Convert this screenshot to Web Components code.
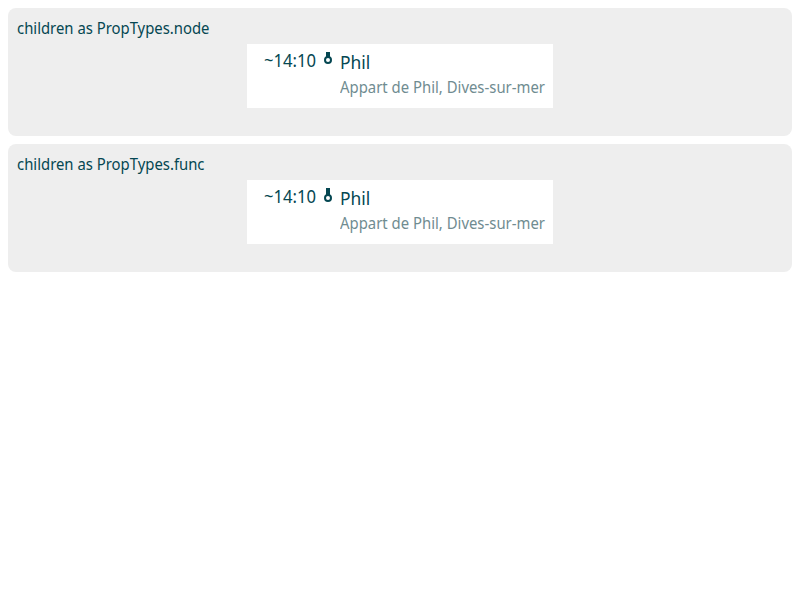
<!DOCTYPE html>
<html lang="en">
<head>
<meta charset="utf-8">
<title>Way points</title>
<style>
body { margin: 8px; background: #fff; color: #054752; font: 16px/20px "Noto Sans", "Open Sans", sans-serif; }
</style>
</head>
<body>
<story-list>
  <story-section heading="children as PropTypes.node" heading-width="192.5">
    <way-point time="~14:10" name="Phil" place="Appart de Phil, Dives-sur-mer" stem="4"></way-point>
  </story-section>
  <story-section heading="children as PropTypes.func" heading-width="187.5">
    <way-point time="~14:10" name="Phil" place="Appart de Phil, Dives-sur-mer" stem="6"></way-point>
  </story-section>
</story-list>
<script>
/* One line of text condensed to the width given in its "width" attribute. */
class FitText extends HTMLElement {
  connectedCallback() {
    const root = this.attachShadow({ mode: 'open' });
    root.innerHTML = `<style>
      :host { display: block; white-space: nowrap; }
      span { display: inline-block; transform-origin: 0 50%; }
    </style><span></span>`;
    const span = root.querySelector('span');
    const width = Number(this.getAttribute('width'));
    span.textContent = this.getAttribute('text');
    this.style.width = width + 'px';
    span.style.transform = `scaleX(${width / span.getBoundingClientRect().width})`;
  }
}

class StoryList extends HTMLElement {
  constructor() {
    super();
    this.attachShadow({ mode: 'open' }).innerHTML = `<style>
      :host { display: flex; flex-direction: column; gap: 8px; }
    </style><slot></slot>`;
  }
}

class StorySection extends HTMLElement {
  connectedCallback() {
    this.attachShadow({ mode: 'open' }).innerHTML = `<style>
      :host { display: flex; flex-direction: column; box-sizing: border-box; height: 128px;
              padding: 10px 8.5px 0; border-radius: 8px; background: #eee; }
      .body { display: flex; justify-content: center; margin-top: 6px; }
    </style>
    <fit-text text="${this.getAttribute('heading')}" width="${this.getAttribute('heading-width')}"></fit-text>
    <div class="body"><slot></slot></div>`;
  }
}

/* Ring hanging from a vertical stem; "stem" is the visible stem length. */
class PinIcon extends HTMLElement {
  connectedCallback() {
    const stem = Number(this.getAttribute('stem'));
    this.attachShadow({ mode: 'open' }).innerHTML = `<style>
      :host, svg { display: block; }
    </style>
    <svg width="8" height="${stem + 8}" viewBox="0 0 8 ${stem + 8}">
      <path d="M2 0h4v${stem + 1}H2z" fill="#054752"/>
      <circle cx="4" cy="${stem + 4}" r="3" fill="#fff" stroke="#054752" stroke-width="2"/>
    </svg>`;
  }
}

class WayPoint extends HTMLElement {
  connectedCallback() {
    this.attachShadow({ mode: 'open' }).innerHTML = `<style>
      :host { display: grid; grid-template-columns: 52px 8px 205px; column-gap: 8px; align-items: start;
              box-sizing: border-box; width: 306px; height: 64px; padding: 8px 8px 0 17px; background: #fff; }
      .time, .name { font-size: 18px; }
      .time { margin-top: -2px; }
      .place { color: #708c91; margin-top: 5px; }
    </style>
    <fit-text class="time" text="${this.getAttribute('time')}" width="52"></fit-text>
    <pin-icon stem="${this.getAttribute('stem')}"></pin-icon>
    <div>
      <fit-text class="name" text="${this.getAttribute('name')}" width="30.3"></fit-text>
      <fit-text class="place" text="${this.getAttribute('place')}" width="205"></fit-text>
    </div>`;
  }
}

customElements.define('fit-text', FitText);
customElements.define('pin-icon', PinIcon);
customElements.define('way-point', WayPoint);
customElements.define('story-section', StorySection);
customElements.define('story-list', StoryList);
</script>
</body>
</html>
